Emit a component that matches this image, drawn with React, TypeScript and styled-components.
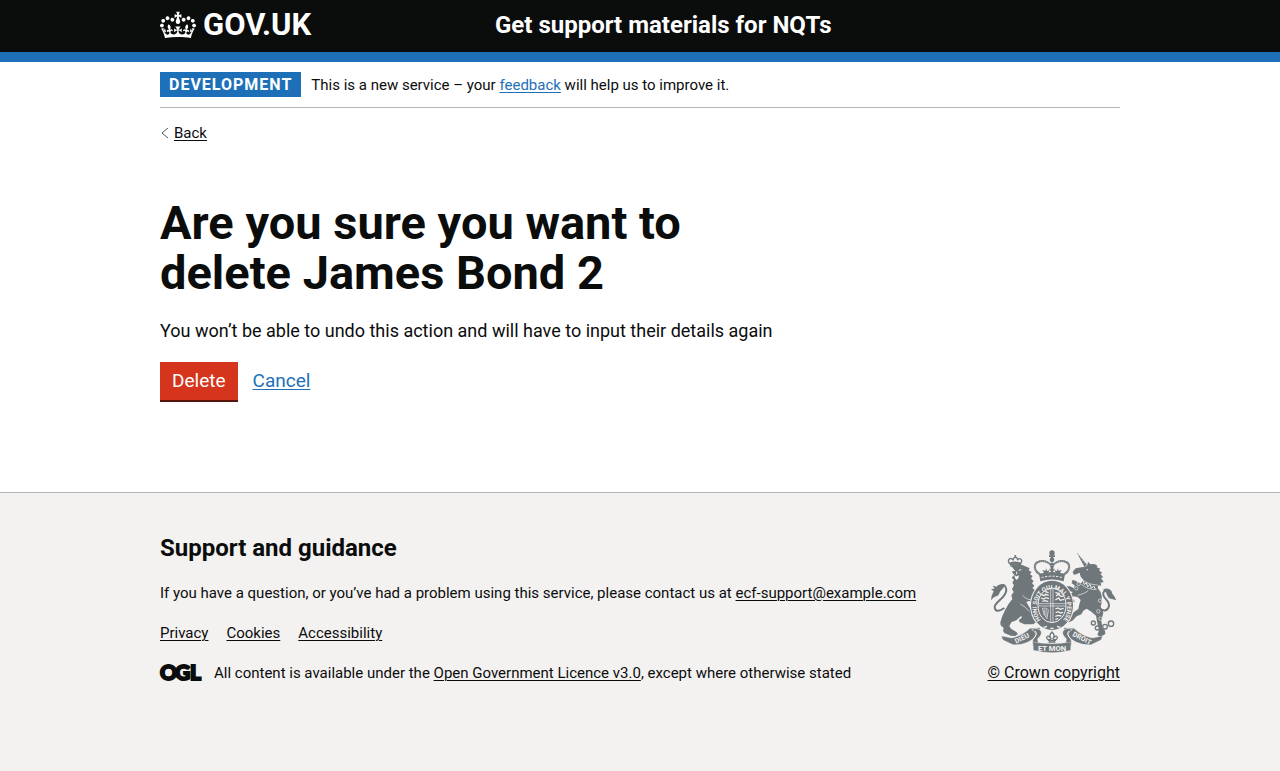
import React from "react";
import styled, { createGlobalStyle } from "styled-components";

const ink = "#0b0c0c";
const blue = "#1d70b8";
const grey = "#b1b4b6";
const paper = "#f3f2f1";
const stone = "#6f777b";
const family = '"GDS Transport", Roboto, "Liberation Sans", sans-serif';

const GlobalStyle = createGlobalStyle`
  *, *::before, *::after { box-sizing: border-box; }
  html { background: ${paper}; }
  body {
    margin: 0;
    background: #fff;
    color: ${ink};
    font-family: ${family};
    font-size: 15px;
    line-height: 20px;
  }
`;

const Container = styled.div`
  max-width: 960px;
  margin: 0 auto;
  @media (max-width: 1020px) {
    margin: 0 30px;
  }
`;

const Link = styled.a<{ $tone?: "blue" | "ink" }>`
  color: ${(p) => (p.$tone === "blue" ? blue : ink)};
  text-decoration: underline;
  text-decoration-thickness: 1px;
  text-underline-offset: 2px;
`;

const Header = styled.header`
  background: ${ink};
  border-bottom: 10px solid ${blue};
  color: #fff;
`;

const HeaderGrid = styled(Container)`
  display: grid;
  grid-template-columns: 320px 1fr;
  column-gap: 15px;
  align-items: center;
  min-height: 52px;
  padding-bottom: 2px;
`;

const HomeLink = styled.a`
  display: inline-flex;
  align-items: center;
  gap: 7px;
  justify-self: start;
  color: #fff;
  font-size: 31px;
  font-weight: 700;
  line-height: 32px;
  text-decoration: none;
  svg { display: block; }
`;

const ServiceName = styled.a`
  color: #fff;
  font-size: 24px;
  font-weight: 700;
  line-height: 30px;
  text-decoration: none;
`;

const PhaseBanner = styled.div`
  display: flex;
  align-items: center;
  gap: 10px;
  padding: 10px 0;
  border-bottom: 1px solid ${grey};
`;

const Tag = styled.strong`
  padding: 4px 9px;
  background: ${blue};
  color: #fff;
  font-size: 16px;
  line-height: 17px;
  letter-spacing: 1px;
  text-transform: uppercase;
`;

const BackRow = styled.div`
  display: flex;
  align-items: center;
  gap: 5px;
  padding: 15px 0;
  svg { display: block; }
`;

const Main = styled.main`
  padding: 40px 0 92px;
`;

const Column = styled.div`
  width: 66%;
`;

const Title = styled.h1`
  margin: 0 0 20px;
  font-size: 47px;
  font-weight: 700;
  line-height: 50px;
`;

const Lead = styled.p`
  margin: 0 0 19px;
  font-size: 18px;
  line-height: 25px;
`;

const Actions = styled.div`
  display: flex;
  align-items: center;
  gap: 15px;
  font-size: 19px;
`;

const DangerButton = styled.button`
  padding: 9px 12px;
  border: 0;
  border-radius: 0;
  background: #d4351c;
  box-shadow: 0 2px 0 #55150b;
  color: #fff;
  font: inherit;
  line-height: 20px;
`;

const Footer = styled.footer`
  padding: 40px 0 88px;
  border-top: 1px solid ${grey};
  background: ${paper};
`;

const FooterRow = styled(Container)`
  display: flex;
  flex-wrap: wrap;
  align-items: flex-end;
  justify-content: space-between;
  gap: 30px;
`;

const FooterTitle = styled.h2`
  margin: 0 0 20px;
  font-size: 24px;
  font-weight: 700;
  line-height: 30px;
`;

const FooterText = styled.p`
  margin: 0 0 20px;
`;

const LinkList = styled.ul`
  display: flex;
  gap: 18px;
  margin: 0 0 20px;
  padding: 0;
  list-style: none;
`;

const Licence = styled.div`
  display: flex;
  align-items: center;
  gap: 13px;
  svg { display: block; }
`;

const Copyright = styled.a`
  display: flex;
  flex-direction: column;
  align-items: center;
  gap: 10px;
  color: ${ink};
  text-decoration: underline;
  text-decoration-thickness: 1px;
  text-underline-offset: 2px;
  font-size: 16px;
  svg { display: block; }
`;

function Crown() {
  return (
    <svg width="36" height="28" viewBox="0 0 132 97" fill="#fff" aria-hidden="true">
      <path
        fillRule="evenodd"
        d="M25 30.2c3.5 1.5 7.7-.2 9.1-3.7 1.5-3.6-.2-7.8-3.9-9.2-3.6-1.4-7.6.3-9.1 3.9-1.4 3.5.3 7.5 3.9 9zM9 39.5c3.6 1.5 7.8-.2 9.2-3.7 1.5-3.6-.2-7.8-3.9-9.1-3.6-1.5-7.6.2-9.1 3.8-1.4 3.5.3 7.5 3.8 9zM4.4 57.2c3.5 1.5 7.7-.2 9.1-3.8 1.5-3.6-.2-7.7-3.9-9.1-3.5-1.5-7.6.3-9.1 3.8-1.4 3.5.3 7.6 3.9 9.1zm38.3-21.4c3.5 1.5 7.7-.2 9.1-3.8 1.5-3.6-.2-7.7-3.9-9.1-3.6-1.5-7.6.3-9.1 3.8-1.3 3.6.4 7.7 3.9 9.1zm64.4-5.6c-3.6 1.5-7.8-.2-9.1-3.7-1.5-3.6.2-7.8 3.8-9.2 3.6-1.4 7.7.3 9.2 3.9 1.3 3.5-.4 7.5-3.9 9zm15.9 9.3c-3.6 1.5-7.7-.2-9.1-3.7-1.5-3.6.2-7.8 3.7-9.1 3.6-1.5 7.7.2 9.2 3.8 1.5 3.5-.3 7.5-3.8 9zm4.7 17.7c-3.6 1.5-7.8-.2-9.2-3.8-1.5-3.6.2-7.7 3.9-9.1 3.6-1.5 7.7.3 9.2 3.8 1.3 3.5-.4 7.6-3.9 9.1zM89.3 35.8c-3.6 1.5-7.8-.2-9.2-3.8-1.4-3.6.2-7.7 3.9-9.1 3.6-1.5 7.7.3 9.2 3.8 1.4 3.6-.3 7.7-3.9 9.1zM69.7 17.7l8.9 4.7V9.3l-8.9 2.8c-.2-.3-.5-.6-.9-.9L72.4 0H59.6l3.5 11.2c-.3.3-.6.5-.9.9l-8.8-2.8v13.1l8.8-4.7c.3.3.6.7.9.9l-5 15.4v.1c-.2.8-.4 1.6-.4 2.4 0 4.1 3.1 7.5 7 8.1h.2c.3 0 .7.1 1 .1.4 0 .7 0 1-.1h.2c4-.6 7.1-4.1 7.1-8.1 0-.8-.1-1.7-.4-2.4V34l-5.1-15.4c.4-.2.7-.6 1-.9zM66 92.8c16.9 0 32.8 1.1 47.1 3.2 4-16.9 8.9-26.7 14-33.5l-9.6-3.4c1 4.9 1.1 7.2 0 10.2-1.5-1.4-3-4.3-4.2-8.7L108.6 76c2.8-2 5-3.2 7.5-3.3-4.4 9.4-10 11.9-13.6 11.2-4.3-.8-6.3-4.6-5.6-7.9 1-4.7 5.7-5.9 8-.5 4.3-8.7-3-11.4-7.6-8.8 7.1-7.2 7.9-13.5 2.1-21.1-8 6.1-8.1 12.3-4.5 20.8-4.7-5.4-12.1-2.5-9.5 6.2 3.4-5.2 7.9-2 7.2 3.1-.6 4.3-6.4 7.8-13.5 7.2-10.3-.9-10.9-8-11.2-13.8 2.5-.5 7.1 1.8 11 7.3L80.2 60c-4.1 4.4-8 5.3-12.3 5.4 1.4-4.4 8-11.6 8-11.6H55.5s6.4 7.2 7.9 11.6c-4.2-.1-8-1-12.3-5.4l1.4 16.4c3.9-5.5 8.5-7.7 10.9-7.3-.3 5.8-.9 12.8-11.1 13.8-7.2.6-12.9-2.9-13.5-7.2-.7-5 3.8-8.3 7.1-3.1 2.7-8.7-4.6-11.6-9.4-6.2 3.7-8.5 3.6-14.7-4.6-20.8-5.8 7.6-5 13.9 2.2 21.1-4.7-2.6-11.9.1-7.7 8.8 2.3-5.5 7.1-4.2 8.1.5.7 3.3-1.3 7.1-5.7 7.9-3.5.7-9-1.8-13.5-11.2 2.5.1 4.7 1.3 7.5 3.3l-4.7-15.4c-1.2 4.4-2.7 7.2-4.3 8.7-1.1-3-.9-5.3 0-10.2l-9.5 3.4c5 6.9 9.9 16.7 14 33.5 14.8-2.1 30.8-3.2 47.7-3.2z"
      />
    </svg>
  );
}

function OglMark() {
  return (
    <svg width="41" height="18" viewBox="0 0 41 18" overflow="visible" role="img" aria-label="Open Government Licence">
      <text
        x="0 15 30"
        y="16"
        fill={ink}
        stroke={ink}
        strokeWidth="2"
        fontFamily="Lato, sans-serif"
        fontSize="21"
        fontWeight="900"
      >
        OGL
      </text>
    </svg>
  );
}

function RoyalArms() {
  return (
    <svg width="125" height="103" viewBox="36 32 375 309" fill={stone} aria-hidden="true">
      {/* crown above the garter */}
      <circle cx="219" cy="41" r="8" />
      <path d="M216 34h6v34h-6zM210 48h18v5h-18z" />
      <circle cx="219" cy="61" r="7" />
      <g fill="none" stroke={stone} strokeWidth="6">
        <path d="M184 106C162 92 162 71 183 66c15-3 30 4 35 15" />
        <path d="M254 106c22-14 22-35 1-40-15-3-30 4-35 15" />
        <path d="M219 70v28" strokeWidth="7" />
      </g>
      <g fill="none" stroke={paper} strokeWidth="2" strokeDasharray="2 4">
        <path d="M184 106C162 92 162 71 183 66c15-3 30 4 35 15" />
        <path d="M254 106c22-14 22-35 1-40-15-3-30 4-35 15" />
      </g>
      <path d="M180 104q39-12 78 0l-4 22q-35-11-70 0z" />
      <path d="M187 115q32-9 64 0" fill="none" stroke={paper} strokeWidth="3" strokeDasharray="7 4" />
      <path d="M196 103l-6-12 9 4 2-8 3 8 8-3-6 11zM242 103l6-12-9 4-2-8-3 8-8-3 6 11zM219 100l-9-12 6 1-2-9h10l-2 9 6-1z" />

      {/* lion */}
      <g fill="none" stroke={stone} strokeWidth="4">
        <path d="M92 74q-8-12 1-16 7-2 9 5 1-9 7-9 7 0 7 9 2-7 9-4 7 5-2 15" />
        <path d="M109 53v-6" strokeWidth="5" />
      </g>
      <path d="M91 70q18-7 36 1l-2 8q-16-6-32 0z" />
      <path
        d="M92 80q18-9 38-3l12 5 10 4-3 7 9 5-5 6 8 7-5 6 8 9-5 5 7 9-6 6 11 8 5 10-3 8-7-5-4 4 8 10 6 11-5 6-9-9-12-4-8 3 7 12 9 14 4 17 10 10 0 8-10 6-26 0-15-7-1-7 8-5-1-7-15 14-15 6-6 12 6 8 14 8 6 7-8 6-14-1-19-8-4-7 2-8-9-8-1-9 6-19 8-17 10-18 12-16-3-11 7-10-5-9 6-11-5-8 5-9-7-6 8-8-7-9 7-6-6-8z"
      />
      <path d="M101 92l7 2M119 93l8-2M113 97v8" fill="none" stroke={paper} strokeWidth="3" />
      <path d="M106 108q7 5 14 0l-2 9-5 5-5-5z" fill={paper} />
      <path d="M124 194q16 8 26 22M131 168q10 13 26 13" fill="none" stroke={paper} strokeWidth="2" />
      <path d="M76 206Q50 224 47 204C46 188 82 176 82 152Q80 134 68 138" fill="none" stroke={stone} strokeWidth="6" />
      <path d="M72 134q-14 0-19 8l-12-3 6 9-11 1 8 7-6 13-2 13 9-8 13-6 6-12 7-8 6-9z" />

      {/* unicorn */}
      <path d="M293 39l31 37-8 6z" />
      <path d="M297 49l5-3M303 57l5-3M308 65l6-3M314 72l5-3" stroke={paper} strokeWidth="1" />
      <path
        d="M317 82l8-4 2-11 7 8q14-4 22 5l-3 4 11 4-4 5 10 8-6 3 9 10-7 2 8 12-9 2 2 9-9-1-2 8q10 10 12 24 2 18-3 32l8 18-6 24 3 22 8 8 1 10-14 8-10-5 5-14-5-22-4-22-14-12-14-9-10 6-6 11-14 6-13 13-17 8 2-9 9-8 7-14 17-12 3-14 4-13-9-9-14-2 0 7 6 9-11 2-6-10 2-14 9-7-17-4-7 5-7-8 8-10 14 0 12 6 2-9-9-6 2-10 10 2 9 8 8-1 6-10-8-9-3-12-10 5-8 1-3-9 9-10z"
      />
      <circle cx="325" cy="91" r="2" fill={paper} />
      <path d="M309 121q19 15 47 16M307 135q18 16 46 16" fill="none" stroke={paper} strokeWidth="2" />
      <path d="M312 124l4 12 6-6 4 12 7-7 4 12 7-7 5 9" fill="none" stroke={paper} strokeWidth="3" />
      <path d="M296 168q20-4 32-14" fill="none" stroke={paper} strokeWidth="2" />
      <path d="M362 208Q384 222 390 200C392 182 369 176 373 160Q378 150 388 158" fill="none" stroke={stone} strokeWidth="6" />
      <path d="M372 151q12-9 25 3l3 9 6 8 6 12-10-3-12-3-6-9-2-7z" />
      <g fill="none" stroke={stone} strokeWidth="4">
        <circle cx="343" cy="251" r="6" />
        <circle cx="355" cy="266" r="6" fill={paper} />
        <circle cx="378" cy="262" r="7" fill={paper} />
        <circle cx="396" cy="253" r="8" />
      </g>
      <g fill={stone} stroke={paper} strokeWidth="2">
        <circle cx="292" cy="147" r="5" />
        <circle cx="299" cy="134" r="5" />
        <circle cx="363" cy="184" r="5" />
        <circle cx="358" cy="216" r="5" />
        <circle cx="364" cy="238" r="5" />
      </g>

      {/* motto ribbon */}
      <path d="M68 290l30 6q31-6 55-29l31-2-8 20q-28 34-74 31l-28-13-4-4z" stroke={paper} />
      <path d="M370 290l-30 6q-31-6-55-29l-31-2 8 20q28 34 74 31l28-13 4-4z" stroke={paper} />
      <path d="M158 270q18-6 28 4 5 12-10 24l2 12-16 10q-5-16 4-25 12-12-8-25zM280 270q-18-6-28 4-5 12 10 24l-2 12 16 10q5-16-4-25-12-12 8-25z" stroke={paper} strokeWidth="2" />
      <path d="M168 275q10 8-5 23M270 275q-10 8 5 23" fill="none" stroke={paper} strokeWidth="3" />
      <path d="M162 308q57 10 114 0l-1 25q-56 14-112 0z" stroke={paper} strokeWidth="1" />
      <g fill={paper} fontFamily={family} fontWeight="700" textAnchor="middle">
        <text x="219" y="334" fontSize="23">ET MON</text>
        <text x="0" y="0" fontSize="21" transform="translate(132 303) rotate(-27)">DIEU</text>
        <text x="0" y="0" fontSize="21" transform="translate(306 303) rotate(27)">DROIT</text>
      </g>

      {/* shield within the garter */}
      <ellipse cx="219" cy="198" rx="66" ry="77" fill={paper} />
      <ellipse cx="219" cy="198" rx="63" ry="74" />
      <ellipse cx="219" cy="198" rx="42" ry="52" fill="none" stroke={paper} strokeWidth="3" />
      <path id="garter" d="M187 244A46 55 0 1 1 251 244" fill="none" />
      <text fill={paper} fontFamily={family} fontWeight="700" fontSize="18">
        <textPath href="#garter" startOffset="50%" textAnchor="middle">HONI SOIT QUI MAL Y PENSE</textPath>
      </text>
      <path d="M178 193h82M178 200h82M215 148v100M222 148v100" stroke={paper} strokeWidth="2" />
      <g fill="none" stroke={paper} strokeWidth="4">
        <path d="M188 166l7 3 6-4 8 3M186 176l8 3 7-4 9 3M190 186l8-2 10 3M199 157l10 3" />
        <path d="M229 160l14 3M231 170l7-5 8 6 7-1M229 182l10-6 5 7 11-3" />
        <path d="M229 209l8-3 7 4 10-3M230 220l8-3 7 4 7-2M229 231l8-3 10 2M229 240l9-2" />
        <path d="M190 207q12-3 18 4l-4 27q-11-10-14-31zM196 210v16M201 210v22" strokeWidth="2" />
      </g>
      <path d="M194 264l10-3M214 267h10M234 261l10 3" fill="none" stroke={paper} strokeWidth="4" />

      {/* flower beneath the shield */}
      <path
        d="M219 278q-10 10-4 18-10-11-12-1 2 9 12 4l-4 9h16l-4-9q10 5 12-4-2-10-12 1 6-8-4-18z"
        fill={paper}
        stroke={stone}
        strokeWidth="4"
      />
      <path d="M207 303h24" stroke={stone} strokeWidth="4" />
    </svg>
  );
}

const footerLinks = ["Privacy", "Cookies", "Accessibility"];

export default function App() {
  return (
    <>
      <GlobalStyle />
      <Header>
        <HeaderGrid>
          <HomeLink href="#">
            <Crown />
            <span>GOV.UK</span>
          </HomeLink>
          <ServiceName href="#">Get support materials for NQTs</ServiceName>
        </HeaderGrid>
      </Header>

      <Container>
        <PhaseBanner>
          <Tag>Development</Tag>
          <span>
            This is a new service – your{" "}
            <Link $tone="blue" href="#">feedback</Link> will help us to improve it.
          </span>
        </PhaseBanner>
        <BackRow>
          <svg width="9" height="12" viewBox="0 0 9 12" fill="none" stroke="#505a5f" aria-hidden="true">
            <path d="M8 1L2 6l6 5" />
          </svg>
          <Link href="#">Back</Link>
        </BackRow>
        <Main>
          <Column>
            <Title>Are you sure you want to delete James Bond 2</Title>
            <Lead>You won’t be able to undo this action and will have to input their details again</Lead>
            <Actions>
              <DangerButton type="button">Delete</DangerButton>
              <Link $tone="blue" href="#">Cancel</Link>
            </Actions>
          </Column>
        </Main>
      </Container>

      <Footer>
        <FooterRow>
          <div>
            <FooterTitle>Support and guidance</FooterTitle>
            <FooterText>
              If you have a question, or you’ve had a problem using this service, please contact us at{" "}
              <Link href="mailto:ecf-support@example.com">ecf-support@example.com</Link>
            </FooterText>
            <LinkList>
              {footerLinks.map((label) => (
                <li key={label}>
                  <Link href="#">{label}</Link>
                </li>
              ))}
            </LinkList>
            <Licence>
              <OglMark />
              <span>
                All content is available under the <Link href="#">Open Government Licence v3.0</Link>, except
                where otherwise stated
              </span>
            </Licence>
          </div>
          <Copyright href="#">
            <RoyalArms />
            <span>© Crown copyright</span>
          </Copyright>
        </FooterRow>
      </Footer>
    </>
  );
}
